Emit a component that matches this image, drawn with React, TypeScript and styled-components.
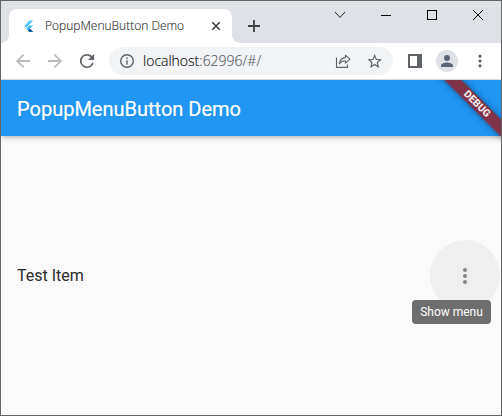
import React from "react";
import styled, { createGlobalStyle } from "styled-components";

const GlobalStyle = createGlobalStyle`
  * { box-sizing: border-box; }
  body { margin: 0; background: #fafafa; overflow: hidden; }
  svg { display: block; flex: none; }
`;

const BrowserWindow = styled.div`
  display: flex;
  flex-direction: column;
  width: 502px;
  height: 416px;
  border: 1px solid #656668;
  background: #fafafa;
`;

const TabStrip = styled.div`
  display: flex;
  flex: none;
  height: 42px;
  padding: 8px 0 0 8px;
  background: #dee1e6;
`;

const Tab = styled.div`
  position: relative;
  display: flex;
  align-items: center;
  width: 223px;
  height: 34px;
  padding: 0 10px 0 12px;
  border-radius: 8px 8px 0 0;
  background: #fff;
  &::before, &::after {
    content: "";
    position: absolute;
    bottom: 0;
    width: 8px;
    height: 8px;
  }
  &::before {
    left: -8px;
    background: radial-gradient(circle at 0 0, transparent 7.5px, #fff 8.2px);
  }
  &::after {
    right: -8px;
    background: radial-gradient(circle at 100% 0, transparent 7.5px, #fff 8.2px);
  }
`;

const TabTitle = styled.span`
  flex: 1;
  margin-left: 8px;
  font: 300 12px/16px "Open Sans", sans-serif;
  -webkit-text-stroke: 0.1px #202124;
  white-space: nowrap;
  color: #202124;
`;

const NewTab = styled.div`
  display: flex;
  width: 28px;
  height: 34px;
  margin-left: 8px;
  align-items: center;
  justify-content: center;
`;

const WindowControls = styled.div`
  display: flex;
  height: 12px;
  margin-left: auto;
`;

const WindowControl = styled.div`
  display: flex;
  width: 46px;
  align-items: center;
  justify-content: center;
`;

const Toolbar = styled.div`
  display: flex;
  flex: none;
  align-items: center;
  height: 37px;
  padding: 0 13px 1px 14px;
  border-bottom: 1px solid #d8dade;
  background: #fff;
`;

const NavIcons = styled.div`
  display: flex;
  gap: 16px;
`;

const AddressBar = styled.div`
  display: flex;
  align-items: center;
  width: 284px;
  height: 28px;
  margin-left: 14px;
  padding: 0 10px 0 11px;
  border-radius: 14px;
  background: #f1f3f4;
`;

const AddressActions = styled.div`
  display: flex;
  gap: 16px;
`;

const Url = styled.span`
  flex: 1;
  margin-left: 9px;
  font: 300 14px/20px "Open Sans", sans-serif;
  -webkit-text-stroke: 0.15px currentColor;
  white-space: nowrap;
  color: #5f6368;
`;

const Host = styled.span`
  color: #111214;
`;

const Avatar = styled.div`
  display: flex;
  align-items: center;
  justify-content: center;
  width: 22px;
  height: 22px;
  margin: 0 14px;
  border-radius: 50%;
  background: #dee1e6;
`;

const AppView = styled.div`
  position: relative;
  display: flex;
  flex: 1;
  flex-direction: column;
  overflow: hidden;
  font-family: Roboto, sans-serif;
`;

const AppBar = styled.header`
  display: flex;
  flex: none;
  align-items: center;
  height: 56px;
  padding: 1px 16px 0;
  background: #2196f3;
  box-shadow: 0 2px 4px -1px rgba(0, 0, 0, 0.2), 0 4px 5px rgba(0, 0, 0, 0.06), 0 1px 6px rgba(0, 0, 0, 0.06);
`;

const AppTitle = styled.h1`
  margin: 0;
  font-size: 20px;
  font-weight: 400;
  line-height: 24px;
  -webkit-text-stroke: 0.2px #fff;
  white-space: nowrap;
  color: #fff;
`;

const DebugBanner = styled.div`
  position: absolute;
  top: 18px;
  right: -26px;
  width: 100px;
  height: 12px;
  transform: rotate(45deg);
  background: #803248;
  box-shadow: 0 0 6px rgba(0, 0, 0, 0.5);
  font-size: 10.2px;
  font-weight: 800;
  line-height: 12px;
  text-align: center;
  color: #f8f1f3;
`;

const Body = styled.main`
  display: flex;
  flex: 1;
  align-items: center;
  justify-content: space-between;
  padding: 0 1px 0 16px;
`;

const ItemLabel = styled.span`
  font-size: 16px;
  line-height: 20px;
  color: #2a2a2a;
`;

const MenuButton = styled.div`
  position: relative;
  display: flex;
  align-items: center;
  justify-content: center;
  width: 70px;
  height: 71px;
  border-radius: 50%;
  background: #efefef;
`;

const Tooltip = styled.div`
  position: absolute;
  top: 60px;
  right: 9px;
  width: 79px;
  height: 24px;
  border-radius: 4px;
  background: #6e6e6e;
  font-size: 12px;
  line-height: 25px;
  text-align: center;
  white-space: nowrap;
  color: #fff;
`;

const FlutterLogo = () => (
  <svg width="16" height="16" viewBox="0 0 16 16">
    <path d="M8.4 2.6h3.7L5.2 9.7 3.3 7.9z" fill="#54c5f8" />
    <path d="M8.4 7.4h3.7L8.9 10.6l3.2 3.3H8.4l-3.2-3.3z" fill="#40bff5" />
    <path d="M7 12.4l1.9-1.8 3.2 3.3H8.4z" fill="#01579b" />
  </svg>
);

interface MaterialIconProps {
  d: string;
  size: number;
  color: string;
  viewBox?: string;
}

const MaterialIcon = ({ d, size, color, viewBox = "0 0 24 24" }: MaterialIconProps) => (
  <svg width={size} height={size} viewBox={viewBox} fill={color}>
    <path d={d} />
  </svg>
);

const icons = {
  back: "M20 11H7.83l5.59-5.59L12 4l-8 8 8 8 1.41-1.41L7.83 13H20v-2z",
  forward: "M12 4l-1.41 1.41L16.17 11H4v2h12.17l-5.58 5.59L12 20l8-8z",
  reload:
    "M17.65 6.35A7.95 7.95 0 0 0 12 4a8 8 0 1 0 7.73 10h-2.08A6 6 0 1 1 12 6c1.66 0 3.14.69 4.22 1.78L13 11h7V4l-2.35 2.35z",
  info: "M11 7h2v2h-2zm0 4h2v6h-2zm1-9a10 10 0 1 0 0 20 10 10 0 0 0 0-20zm0 18a8 8 0 1 1 0-16 8 8 0 0 1 0 16z",
  star: "M22 9.24l-7.19-.62L12 2 9.19 8.63 2 9.24l5.46 4.73L5.82 21 12 17.27 18.18 21l-1.63-7.03L22 9.24zM12 15.4l-3.76 2.27 1-4.28-3.32-2.88 4.38-.38L12 6.1l1.71 4.04 4.38.38-3.32 2.88 1 4.28L12 15.4z",
  person: "M12 12a4 4 0 1 0 0-8 4 4 0 0 0 0 8zm0 2c-2.67 0-8 1.34-8 4v2h16v-2c0-2.66-5.33-4-8-4z",
  more: "M12 8a2 2 0 1 0 0-4 2 2 0 0 0 0 4zm0 2a2 2 0 1 0 0 4 2 2 0 0 0 0-4zm0 6a2 2 0 1 0 0 4 2 2 0 0 0 0-4z",
};

export default function App() {
  return (
    <>
      <GlobalStyle />
      <BrowserWindow>
        <TabStrip>
          <Tab>
            <FlutterLogo />
            <TabTitle>PopupMenuButton Demo</TabTitle>
            <svg width="12" height="12" viewBox="0 0 12 12" fill="none" stroke="#3c4043" strokeWidth="1.6">
              <path d="M2.3 2.3l7.4 7.4M9.7 2.3L2.3 9.7" />
            </svg>
          </Tab>
          <NewTab>
            <svg width="12" height="12" viewBox="0 0 12 12" fill="none" stroke="#3c4043" strokeWidth="1.8">
              <path d="M6 0v12M0 6h12" />
            </svg>
          </NewTab>
          <WindowControls>
            <WindowControl>
              <svg width="12" height="12" viewBox="0 0 12 12" fill="none" stroke="#222">
                <path d="M1 3l5 5.5L11 3" />
              </svg>
            </WindowControl>
            <WindowControl>
              <svg width="10" height="10" viewBox="0 0 10 10" fill="none" stroke="#000">
                <path d="M0 5.5h10" />
              </svg>
            </WindowControl>
            <WindowControl>
              <svg width="10" height="10" viewBox="0 0 10 10" fill="none" stroke="#000">
                <rect x="0.5" y="0.5" width="9" height="9" />
              </svg>
            </WindowControl>
            <WindowControl>
              <svg width="10" height="10" viewBox="0 0 10 10" fill="none" stroke="#000">
                <path d="M0 0l10 10M10 0L0 10" />
              </svg>
            </WindowControl>
          </WindowControls>
        </TabStrip>
        <Toolbar>
          <NavIcons>
            <MaterialIcon d={icons.back} size={16} color="#b9bbbd" viewBox="3 3 18 18" />
            <MaterialIcon d={icons.forward} size={16} color="#b9bbbd" viewBox="3 3 18 18" />
            <MaterialIcon d={icons.reload} size={16} color="#5f6368" viewBox="3 3 18 18" />
          </NavIcons>
          <AddressBar>
            <MaterialIcon d={icons.info} size={14} color="#5f6368" viewBox="2 2 20 20" />
            <Url>
              <Host>localhost</Host>:62996/#/
            </Url>
            <AddressActions>
              <svg width="16" height="16" viewBox="0 0 16 16" fill="none" stroke="#5f6368" strokeWidth="1.1">
                <path d="M1.5 4.5v9.9h11v-3" />
                <path d="M10.4 2.2l4.6 4-4.6 4V7.8c-2.7 0-4.7 1-6 3 .4-3.5 2.5-6 6-6.2z" strokeLinejoin="round" />
              </svg>
              <MaterialIcon d={icons.star} size={16} color="#5f6368" viewBox="1.5 0.5 22 22" />
            </AddressActions>
          </AddressBar>
          <svg width="29" height="14" viewBox="0 0 29 14">
            <path d="M15 0h14v14H15zM17 2v10h7V2z" fill="#5f6368" fillRule="evenodd" />
          </svg>
          <Avatar>
            <MaterialIcon d={icons.person} size={18} color="#5a6378" />
          </Avatar>
          <MaterialIcon d={icons.more} size={16} color="#5f6368" viewBox="2 2 20 20" />
        </Toolbar>
        <AppView>
          <AppBar>
            <AppTitle>PopupMenuButton Demo</AppTitle>
          </AppBar>
          <Body>
            <ItemLabel>Test Item</ItemLabel>
            <MenuButton>
              <MaterialIcon d={icons.more} size={24} color="#858585" />
              <Tooltip>Show menu</Tooltip>
            </MenuButton>
          </Body>
          <DebugBanner>DEBUG</DebugBanner>
        </AppView>
      </BrowserWindow>
    </>
  );
}
